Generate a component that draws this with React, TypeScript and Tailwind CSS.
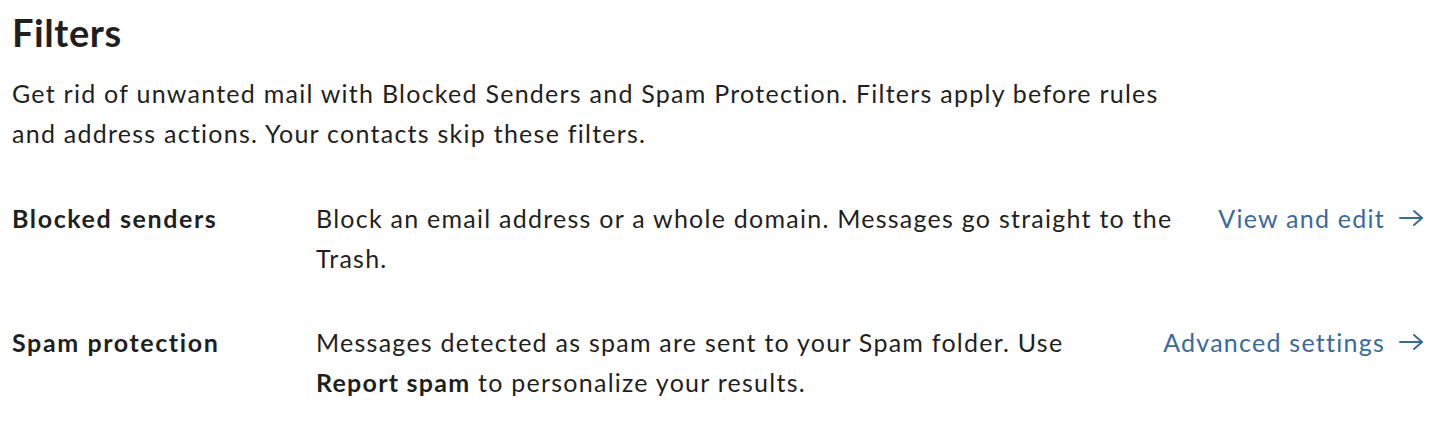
import React from "react";

function Arrow() {
  return (
    <svg width="26" height="20" viewBox="0 0 26 20" fill="none" stroke="currentColor" strokeWidth="2" strokeLinecap="round" strokeLinejoin="round">
      <path d="M2 10h22" />
      <path d="M16 3l8 7-8 7" />
    </svg>
  );
}

function Row({ label, desc, link }: { label: string; desc: React.ReactNode; link: string }) {
  return (
    <div className="flex items-start">
      <div className="w-[304px] shrink-0 font-bold tracking-[1.6px]">{label}</div>
      <div className="flex-1">{desc}</div>
      <a className="ml-6 flex shrink-0 items-center gap-[13px] text-[#386a9f]" href="#">
        {link}
        <Arrow />
      </a>
    </div>
  );
}

export default function App() {
  return (
    <div
      className="min-h-[426px] bg-white px-3 pt-[9px] text-[25px] leading-[40px] tracking-[1.25px] text-[#1f1f21]"
      style={{ fontFamily: "Lato, 'Open Sans', sans-serif" }}
    >
      <h1 className="text-[38px] font-bold leading-[46px] tracking-[0.6px]">Filters</h1>
      <p className="mt-[18px] max-w-[1175px]">
        Get rid of unwanted mail with Blocked Senders and Spam Protection. Filters apply before rules and address actions. Your contacts skip these filters.
      </p>
      <div className="mt-[45px] flex w-[1412px] flex-col gap-[44px]">
        <Row
          label="Blocked senders"
          desc="Block an email address or a whole domain. Messages go straight to the Trash."
          link="View and edit"
        />
        <Row
          label="Spam protection"
          desc={
            <>
              Messages detected as spam are sent to your Spam folder. Use{" "}
              <b className="whitespace-nowrap">Report spam</b> to personalize your results.
            </>
          }
          link="Advanced settings"
        />
      </div>
    </div>
  );
}
